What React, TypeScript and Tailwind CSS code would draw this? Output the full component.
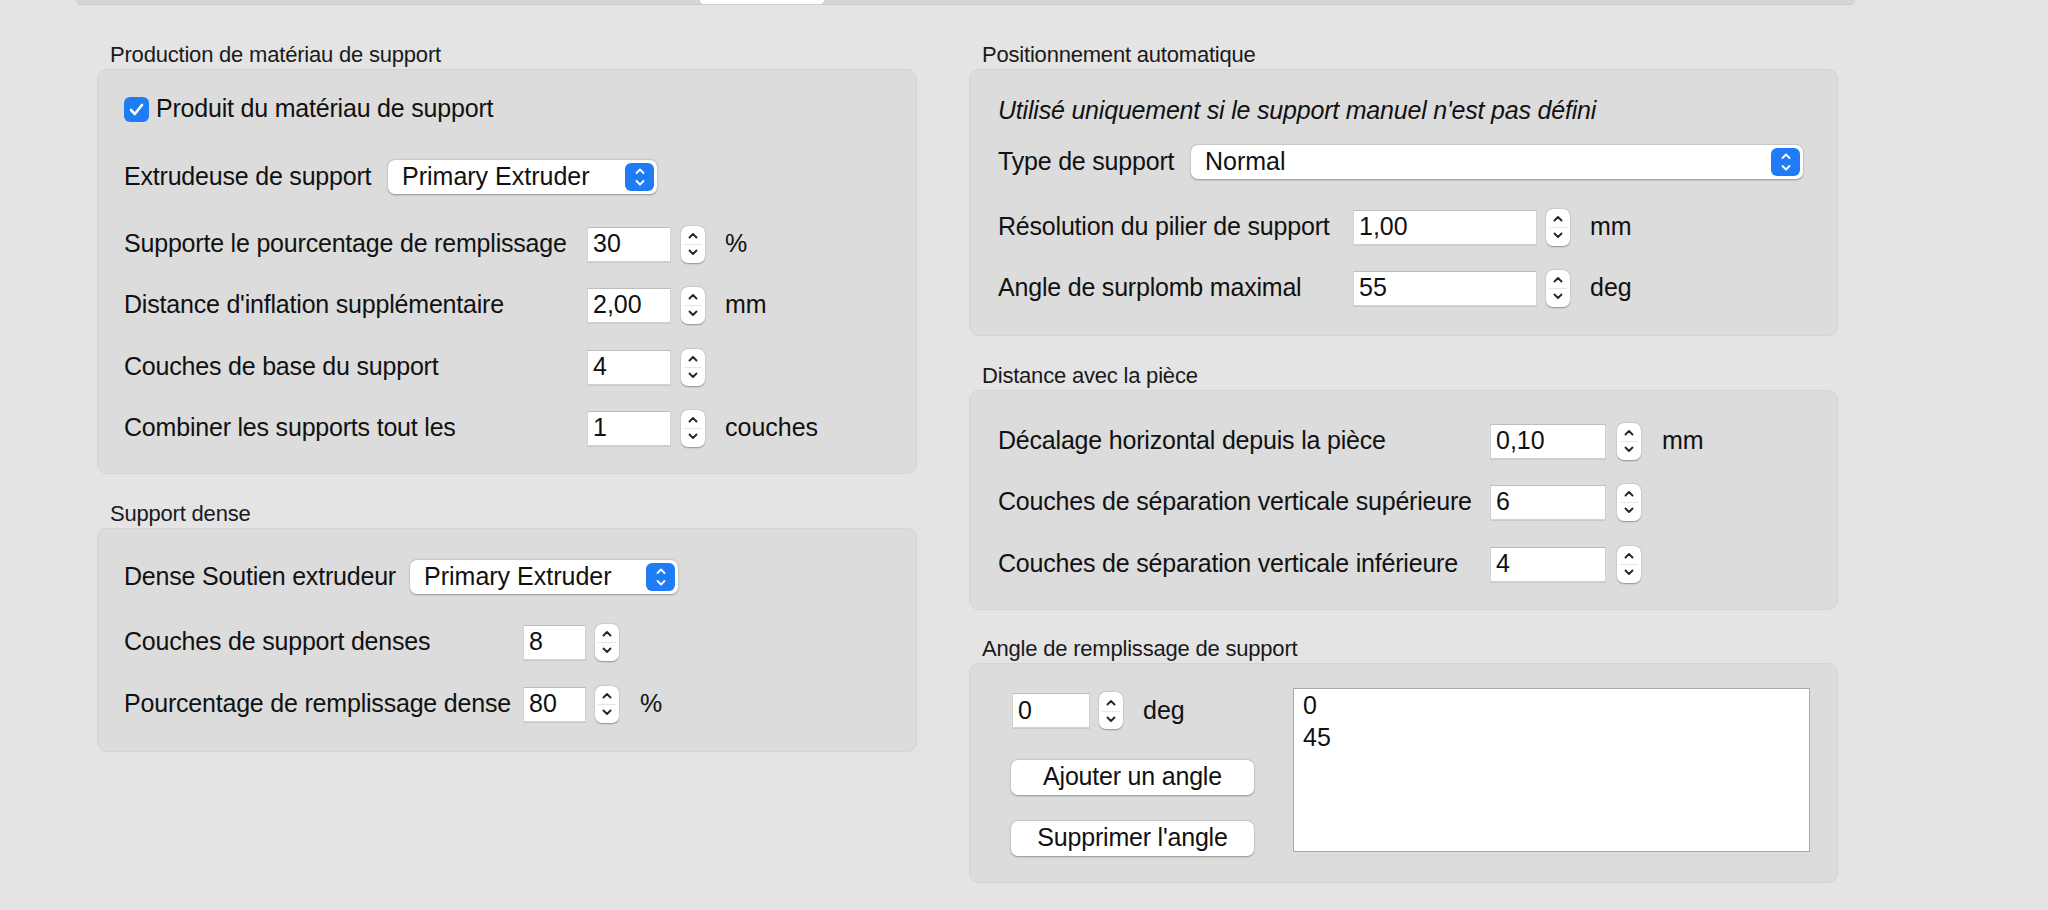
import type { ReactNode } from "react";

function Chevrons({ color = "#2b2b2b", size = 10 }: { color?: string; size?: number }) {
  return (
    <svg width={size} height={size * 2.2} viewBox="0 0 10 22" fill="none">
      <path d="M1.5 7 L5 3.5 L8.5 7" stroke={color} strokeWidth="1.8" strokeLinecap="round" strokeLinejoin="round" />
      <path d="M1.5 15 L5 18.5 L8.5 15" stroke={color} strokeWidth="1.8" strokeLinecap="round" strokeLinejoin="round" />
    </svg>
  );
}

function Stepper({ ml }: { ml: string }) {
  return (
    <div
      className={`${ml} relative flex h-[37px] w-[24px] items-center justify-center rounded-[7px] bg-white shadow-[0_0.5px_1.5px_rgba(0,0,0,0.35)]`}
    >
      <div className="absolute left-[3px] right-[3px] top-1/2 h-px bg-[#e6e6e6]" />
      <svg width="12" height="28" viewBox="0 0 12 28" fill="none">
        <path d="M2.5 7.5 L6 4 L9.5 7.5" stroke="#262626" strokeWidth="1.9" strokeLinecap="round" strokeLinejoin="round" />
        <path d="M2.5 20.5 L6 24 L9.5 20.5" stroke="#262626" strokeWidth="1.9" strokeLinecap="round" strokeLinejoin="round" />
      </svg>
    </div>
  );
}

function NumberField({
  value,
  width,
  stepGap,
  unit,
  unitGap,
}: {
  value: string;
  width: string;
  stepGap: string;
  unit?: string;
  unitGap?: string;
}) {
  return (
    <div className="flex items-center">
      <div
        className={`${width} flex h-[35px] items-center border border-[#d2d2d2] border-t-[#bdbdbd] bg-white pl-[5px] text-[25px] shadow-[0_1px_0_rgba(0,0,0,0.08)]`}
      >
        {value}
      </div>
      <Stepper ml={stepGap} />
      {unit && <span className={`${unitGap} text-[25px]`}>{unit}</span>}
    </div>
  );
}

function Popup({ value, width }: { value: string; width: string }) {
  return (
    <div
      className={`${width} flex h-[34px] items-center justify-between rounded-[7px] bg-white pl-[14px] pr-[3px] text-[25px] shadow-[0_0.5px_2px_rgba(0,0,0,0.35)]`}
    >
      <span>{value}</span>
      <div className="flex h-[28px] w-[29px] items-center justify-center rounded-[6px] bg-[#1f7cf6]">
        <Chevrons color="#ffffff" size={10} />
      </div>
    </div>
  );
}

function Row({ label, labelW, mt, children }: { label: string; labelW: string; mt: string; children: ReactNode }) {
  return (
    <div className={`${mt} flex h-[36px] items-center`}>
      <div className={`${labelW} shrink-0 whitespace-nowrap text-[25px] tracking-[-0.2px]`}>{label}</div>
      {children}
    </div>
  );
}

function Title({ children, mt = "" }: { children: ReactNode; mt?: string }) {
  return (
    <div className={`${mt} h-[28px] pl-[13px] text-[22px] leading-[28px] tracking-[-0.2px] text-[#1a1a1a]`}>{children}</div>
  );
}

function Box({ children, className }: { children: ReactNode; className: string }) {
  return <div className={`rounded-[10px] border border-[#d3d3d3] bg-[#dcdcdc] ${className}`}>{children}</div>;
}

function PushButton({ label, mt }: { label: string; mt: string }) {
  return (
    <div
      className={`${mt} flex h-[35px] w-[243px] items-center justify-center rounded-[7px] bg-white text-[25px] tracking-[-0.2px] shadow-[0_0.5px_2px_rgba(0,0,0,0.35)]`}
    >
      {label}
    </div>
  );
}

export default function App() {
  return (
    <div className="h-[910px] w-[2048px] overflow-hidden bg-[#e4e4e4] font-['Liberation_Sans',Arial,sans-serif] text-[#111111]">
      {/* tab bar remnant */}
      <div className="relative ml-[76px] h-[5px] w-[1779px] rounded-b-[6px] border-b border-[#c8c8c8] bg-[#d6d6d6]">
        <div className="absolute left-[623px] top-0 h-[5px] w-[126px] rounded-b-[6px] border border-t-0 border-[#cdcdcd] bg-white" />
      </div>

      <div className="mt-[36px] flex gap-[52px] pl-[97px]">
        {/* left column */}
        <div className="w-[820px]">
          <Title>Production de matériau de support</Title>
          <Box className="h-[405px] pl-[26px] pt-[22px]">
            <div className="flex h-[34px] items-center">
              <div className="flex h-[25px] w-[25px] items-center justify-center rounded-[6px] bg-[#1f7cf6]">
                <svg width="15" height="13" viewBox="0 0 15 13" fill="none">
                  <path d="M2 7 L5.8 11 L13 2" stroke="#fff" strokeWidth="2.6" strokeLinecap="round" strokeLinejoin="round" />
                </svg>
              </div>
              <span className="ml-[7px] text-[25px] tracking-[-0.2px]">Produit du matériau de support</span>
            </div>
            <div className="mt-[34px] flex h-[34px] items-center">
              <div className="w-[264px] text-[25px] tracking-[-0.2px]">Extrudeuse de support</div>
              <Popup value="Primary Extruder" width="w-[269px]" />
            </div>
            <Row label="Supporte le pourcentage de remplissage" labelW="w-[463px]" mt="mt-[32px]">
              <NumberField value="30" width="w-[84px]" stepGap="ml-[10px]" unit="%" unitGap="ml-[20px]" />
            </Row>
            <Row label="Distance d'inflation supplémentaire" labelW="w-[463px]" mt="mt-[25px]">
              <NumberField value="2,00" width="w-[84px]" stepGap="ml-[10px]" unit="mm" unitGap="ml-[20px]" />
            </Row>
            <Row label="Couches de base du support" labelW="w-[463px]" mt="mt-[26px]">
              <NumberField value="4" width="w-[84px]" stepGap="ml-[10px]" />
            </Row>
            <Row label="Combiner les supports tout les" labelW="w-[463px]" mt="mt-[25px]">
              <NumberField value="1" width="w-[84px]" stepGap="ml-[10px]" unit="couches" unitGap="ml-[20px]" />
            </Row>
          </Box>

          <Title mt="mt-[26px]">Support dense</Title>
          <Box className="h-[224px] pl-[26px] pt-[31px]">
            <div className="flex h-[34px] items-center">
              <div className="w-[286px] text-[25px] tracking-[-0.2px]">Dense Soutien extrudeur</div>
              <Popup value="Primary Extruder" width="w-[268px]" />
            </div>
            <Row label="Couches de support denses" labelW="w-[399px]" mt="mt-[30px]">
              <NumberField value="8" width="w-[63px]" stepGap="ml-[9px]" />
            </Row>
            <Row label="Pourcentage de remplissage dense" labelW="w-[399px]" mt="mt-[26px]">
              <NumberField value="80" width="w-[63px]" stepGap="ml-[9px]" unit="%" unitGap="ml-[21px]" />
            </Row>
          </Box>
        </div>

        {/* right column */}
        <div className="w-[869px]">
          <Title>Positionnement automatique</Title>
          <Box className="h-[267px] pl-[28px] pt-[26px]">
            <div className="flex h-[30px] items-center text-[25px] italic tracking-[-0.2px]">
              Utilisé uniquement si le support manuel n'est pas défini
            </div>
            <div className="mt-[19px] flex h-[34px] items-center">
              <div className="w-[193px] text-[25px] tracking-[-0.2px]">Type de support</div>
              <Popup value="Normal" width="w-[612px]" />
            </div>
            <Row label="Résolution du pilier de support" labelW="w-[355px]" mt="mt-[30px]">
              <NumberField value="1,00" width="w-[184px]" stepGap="ml-[9px]" unit="mm" unitGap="ml-[20px]" />
            </Row>
            <Row label="Angle de surplomb maximal" labelW="w-[355px]" mt="mt-[25px]">
              <NumberField value="55" width="w-[184px]" stepGap="ml-[9px]" unit="deg" unitGap="ml-[20px]" />
            </Row>
          </Box>

          <Title mt="mt-[26px]">Distance avec la pièce</Title>
          <Box className="h-[220px] pl-[28px] pt-[32px]">
            <Row label="Décalage horizontal depuis la pièce" labelW="w-[492px]" mt="">
              <NumberField value="0,10" width="w-[116px]" stepGap="ml-[11px]" unit="mm" unitGap="ml-[21px]" />
            </Row>
            <Row label="Couches de séparation verticale supérieure" labelW="w-[492px]" mt="mt-[25px]">
              <NumberField value="6" width="w-[116px]" stepGap="ml-[11px]" />
            </Row>
            <Row label="Couches de séparation verticale inférieure" labelW="w-[492px]" mt="mt-[26px]">
              <NumberField value="4" width="w-[116px]" stepGap="ml-[11px]" />
            </Row>
          </Box>

          <Title mt="mt-[25px]">Angle de remplissage de support</Title>
          <Box className="flex h-[220px] items-start pl-[41px] pt-[24px]">
            <div className="pt-[4px]">
              <div className="pl-px">
                <NumberField value="0" width="w-[78px]" stepGap="ml-[9px]" unit="deg" unitGap="ml-[20px]" />
              </div>
              <PushButton label="Ajouter un angle" mt="mt-[30px]" />
              <PushButton label="Supprimer l'angle" mt="mt-[26px]" />
            </div>
            <div className="ml-[39px] h-[164px] w-[517px] border border-[#a9a9a9] bg-white pl-[9px] text-[25px] leading-[32px]">
              <div>0</div>
              <div>45</div>
            </div>
          </Box>
        </div>
      </div>
    </div>
  );
}
